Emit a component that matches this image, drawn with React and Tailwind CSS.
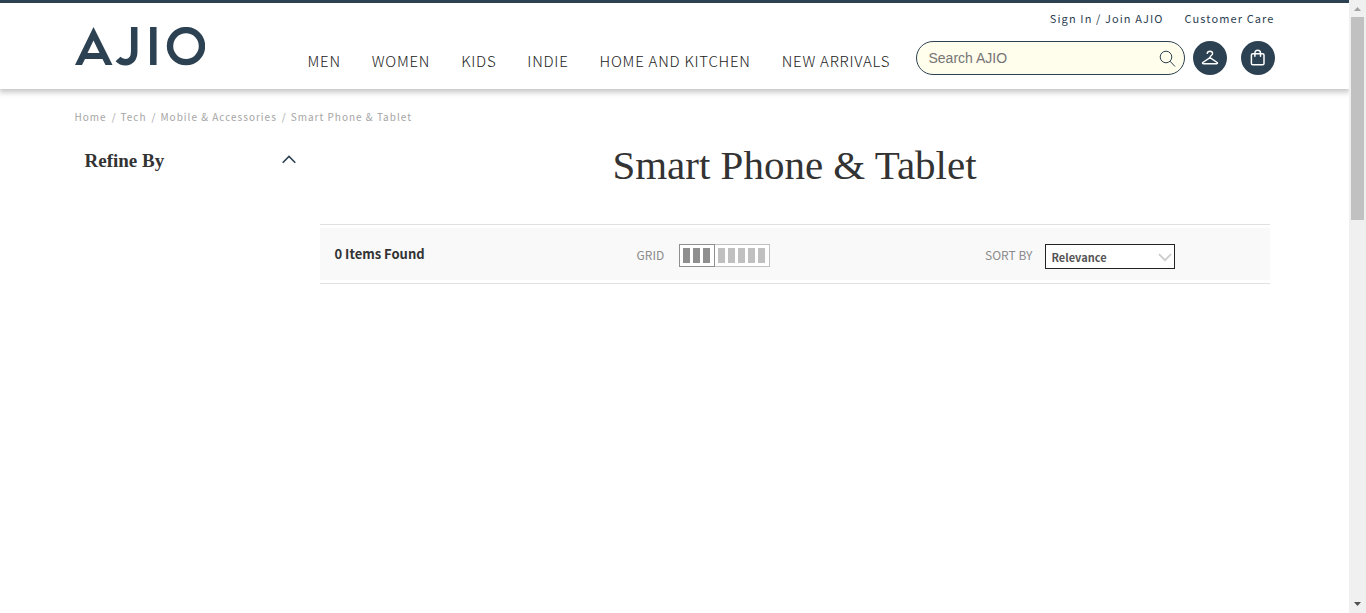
const NAV = ['MEN', 'WOMEN', 'KIDS', 'INDIE', 'HOME AND KITCHEN', 'NEW ARRIVALS'];
const CRUMBS = ['Home', 'Tech', 'Mobile & Accessories', 'Smart Phone & Tablet'];

function Logo() {
  return (
    <svg width="130" height="39" viewBox="0 0 130 39" fill="none" aria-hidden="true">
      <path
        fill="#2c4152"
        fillRule="evenodd"
        d="M18.5 0 37.5 38H30.5L27.5 32H10L7 38H0ZM18.5 13.5 12.5 26H24.5Z"
      />
      <path stroke="#2c4152" strokeWidth="6.5" d="M59.2 0V24.5C59.2 32 55.5 35.2 50.5 35.2C47.5 35.2 45 34.2 43 32" />
      <path stroke="#2c4152" strokeWidth="6.5" d="M78.3 0V38" />
      <circle cx="111" cy="19.1" r="16" stroke="#2c4152" strokeWidth="6.4" />
    </svg>
  );
}

function Header() {
  return (
    <header className="border-t-[3px] border-[#2c4152] bg-white shadow-[0_2px_6px_1px_rgba(0,0,0,0.25)]">
      <div className="mx-auto flex h-[86px] max-w-[1200px] items-start">
        <a href="#" aria-label="AJIO" className="mt-6 shrink-0">
          <Logo />
        </a>
        <nav className="mt-[47px] ml-[103px] flex gap-[31px] text-[15px] leading-[22px] font-light tracking-wider whitespace-nowrap text-[#222]">
          {NAV.map((item) => (
            <a key={item} href="#">
              {item}
            </a>
          ))}
        </nav>
        <div className="ml-auto w-[359px] shrink-0">
          <div className="mt-[7px] flex h-4 justify-end gap-[21px] text-[11px] leading-4 tracking-widest text-[#2c4152]">
            <a href="#">Sign In / Join AJIO</a>
            <a href="#">Customer Care</a>
          </div>
          <div className="mt-[15px] flex items-center">
            <form className="flex h-[34px] flex-1 items-center rounded-full border border-[#2c4152] bg-[#fffdec] pr-2 pl-3">
              <input
                type="text"
                aria-label="Search AJIO"
                placeholder="Search AJIO"
                className="w-full min-w-0 flex-1 bg-transparent font-['Liberation_Sans',Arial,sans-serif] text-sm outline-none placeholder:text-[#757575]"
              />
              <button type="button" aria-label="Search">
                <svg width="17" height="17" viewBox="0 0 17 17" fill="none" stroke="#2c4152" strokeWidth="1" aria-hidden="true">
                  <circle cx="7" cy="7" r="5.8" />
                  <path d="m11 11.200 5 5.300" />
                </svg>
              </button>
            </form>
            <button type="button" aria-label="Wishlist" className="ml-2 flex size-[34px] items-center justify-center rounded-full bg-[#2c4152]">
              <svg width="18" height="16" viewBox="0 0 18 16" fill="none" stroke="#fff" strokeWidth="1.4" strokeLinejoin="round" strokeLinecap="round" aria-hidden="true">
                <path d="M6.2 3.4C6.4 1.9 7.6 1.2 9 1.2C10.5 1.2 11.6 2.2 11.6 3.5C11.6 5.6 9 5.4 9 7.6L16.2 12.5C16.8 13.1 16.5 13.7 15.8 13.7H2.2C1.5 13.7 1.2 13.1 1.8 12.5L9 7.6" />
              </svg>
            </button>
            <button type="button" aria-label="Bag" className="ml-[14px] flex size-[34px] items-center justify-center rounded-full bg-[#2c4152]">
              <svg width="16" height="18" viewBox="0 0 16 18" fill="none" stroke="#fff" strokeWidth="1.5" strokeLinecap="round" aria-hidden="true">
                <rect x="1.4" y="4.7" width="12.6" height="11.1" rx="1.4" />
                <path d="M4.9 7.300V4.300C4.900 2.400 6 1.300 7.700 1.300S10.500 2.400 10.500 4.300V7.300" />
              </svg>
            </button>
          </div>
        </div>
      </div>
    </header>
  );
}

function GridButton({ count, label, className, barClass }) {
  return (
    <button type="button" aria-label={label} className={`flex h-[23px] items-center gap-[3px] border bg-white pr-1 pl-[3px] ${className}`}>
      {Array.from({ length: count }, (_, i) => (
        <span key={i} className={`h-[15px] w-[7px] ${barClass}`} />
      ))}
    </button>
  );
}

function Toolbar() {
  return (
    <div className="mt-9 border-y border-[#e1e1e1] py-[3px]">
      <div className="flex h-[52px] items-center bg-[#f9f9f9] pt-[2px] pr-[95px] pl-[15px]">
        <strong className="w-[302px] pb-[2px] text-[13px] leading-5 font-bold text-[#333]">0 Items Found</strong>
        <span className="w-[42px] text-xs leading-5 text-[#8b8b8b]">GRID</span>
        <div className="flex">
          <GridButton count={3} label="Three columns" className="border-[#8f8f8f]" barClass="bg-[#8f8f8f]" />
          <GridButton count={5} label="Five columns" className="border-l-0 border-[#c0c0c0]" barClass="bg-[#c0c0c0]" />
        </div>
        <label htmlFor="sort" className="ml-auto text-xs leading-5 text-[#8b8b8b]">
          SORT BY
        </label>
        <div className="relative mt-[2px] ml-3">
          <select id="sort" className="h-[25px] w-[130px] appearance-none border border-[#222] bg-white pr-6 pl-[6px] text-[11px] font-bold text-[#555]">
            <option>Relevance</option>
          </select>
          <svg className="pointer-events-none absolute top-[10px] right-[3px]" width="14" height="9" viewBox="0 0 14 9" fill="none" stroke="#ccc" strokeWidth="1.8" aria-hidden="true">
            <path d="m1 1.200 6 6 6-6" />
          </svg>
        </div>
      </div>
    </div>
  );
}

function Scrollbar() {
  return (
    <div aria-hidden="true" className="flex h-screen w-[17px] shrink-0 flex-col items-center justify-between bg-[#f0f0f0]">
      <div className="flex w-full flex-1 flex-col items-center">
        <svg width="17" height="17" viewBox="0 0 17 17" fill="#a3a3a3">
          <path d="M5 11h7L8.500 7Z" />
        </svg>
        <div className="h-[34%] w-[13px] bg-[#c1c1c1]" />
      </div>
      <svg width="17" height="17" viewBox="0 0 17 17" fill="#505050">
        <path d="M5 6h7L8.500 10Z" />
      </svg>
    </div>
  );
}

export default function App() {
  return (
    <div className="flex min-h-screen bg-white font-['Noto_Sans_CJK_SC',sans-serif]">
      <div className="min-w-0 flex-1 overflow-hidden">
        <Header />
        <main className="mx-auto max-w-[1200px]">
          <nav aria-label="Breadcrumb" className="pt-5">
            <ol className="flex gap-[5px] text-[10px] leading-4 tracking-widest text-[#a5a5a5]">
              {CRUMBS.map((crumb, i) => (
                <li key={crumb} className="flex gap-1">
                  {i > 0 && <span>/</span>}
                  <a href="#">{crumb}</a>
                </li>
              ))}
            </ol>
          </nav>
          <div className="flex">
            <aside className="w-[245px] shrink-0 pt-6 pr-6 pl-[10px]">
              <button type="button" className="flex w-full items-center justify-between">
                <span className="font-['Liberation_Serif',serif] text-[19px] leading-6 font-bold text-[#333]">Refine By</span>
                <svg className="mb-1" width="14" height="9" viewBox="0 0 14 9" fill="none" stroke="#2c4152" strokeWidth="1.6" aria-hidden="true">
                  <path d="m.7 7.800 6.300-6.300 6.300 6.300" />
                </svg>
              </button>
            </aside>
            <section className="min-w-0 flex-1 pt-[17px] pr-[5px]">
              <h1 className="text-center font-['Liberation_Serif',serif] text-[41px] leading-[46px] text-[#333]">Smart Phone &amp; Tablet</h1>
              <Toolbar />
            </section>
          </div>
        </main>
      </div>
      <Scrollbar />
    </div>
  );
}
